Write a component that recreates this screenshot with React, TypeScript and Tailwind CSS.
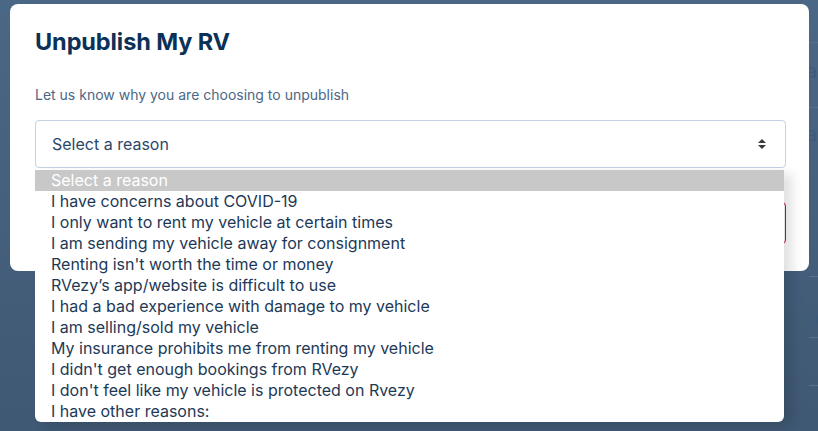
import { useState } from "react";

const reasons = [
  "Select a reason",
  "I have concerns about COVID-19",
  "I only want to rent my vehicle at certain times",
  "I am sending my vehicle away for consignment",
  "Renting isn't worth the time or money",
  "RVezy’s app/website is difficult to use",
  "I had a bad experience with damage to my vehicle",
  "I am selling/sold my vehicle",
  "My insurance prohibits me from renting my vehicle",
  "I didn't get enough bookings from RVezy",
  "I don't feel like my vehicle is protected on Rvezy",
  "I have other reasons:",
];

const Caret = () => (
  <svg width="10" height="12" viewBox="0 0 10 12" className="text-[#343a40]">
    <path d="M1 5 L5 1 L9 5 Z" fill="currentColor" />
    <path d="M1 7 L5 11 L9 7 Z" fill="currentColor" />
  </svg>
);

export default function App() {
  const [selected] = useState(0);
  return (
    <div className="relative w-[818px] h-[431px] overflow-hidden bg-gradient-to-b from-[#4b6786] to-[#3f5873] font-['Inter','Noto_Sans',sans-serif]">
      {/* table of the page behind the overlay, mostly hidden */}
      <div className="absolute left-[809px] top-0 w-[9px] h-full overflow-hidden text-[#3e5b7b]">
        <div className="w-[60px] -ml-[4px]">
          <div className="h-[43px] border-b border-[#56708d]" />
          <div className="h-[65px] border-b border-[#56708d] pt-[16px] text-[20px] leading-[24px] pl-[1px]">a</div>
          <div className="h-[169px] border-b border-[#56708d] pt-[14px] text-[20px] leading-[24px] pl-[1px]">a</div>
          <div className="h-[61px] border-b border-[#56708d] pt-[33px] text-[15px] leading-[20px] font-semibold -ml-[26px]">
            Length
          </div>
          <div className="h-[48px] border-b border-[#56708d] pt-[14px] text-[16px] leading-[20px] -ml-[21px]">42</div>
        </div>
      </div>

      <div className="pt-[4px] pl-[10px]">
        <div className="w-[799px] h-[267px] bg-white rounded-[8px] px-[25px] pt-[22px]">
          <h2 className="text-[23.5px] leading-[32px] font-bold text-[#0b3157] tracking-[-0.1px]">Unpublish My RV</h2>
          <p className="mt-[27px] text-[14px] leading-[20px] text-[#4b6785]">
            Let us know why you are choosing to unpublish
          </p>
          <div className="mt-[15px] relative">
            <div className="h-[48px] w-[751px] border border-[#c3d1e2] rounded-[4px] flex items-center justify-between pl-[16px] pr-[18px] text-[16px] text-[#2c4868]">
              <span>Select a reason</span>
              <Caret />
            </div>
            <div className="mt-[34px] flex justify-end w-[751px]">
              <button className="h-[42px] w-[150px] border border-[#c8102e] rounded-[4px] text-[#c8102e] text-[15px] font-semibold">
                Unpublish
              </button>
            </div>

            <ul className="absolute left-0 top-[50px] w-[749px] bg-white rounded-b-[6px] shadow-[8px_4px_12px_rgba(0,0,0,0.12)] overflow-hidden text-[16px] leading-[21px] text-[#1d3957]">
              {reasons.map((r, i) => (
                <li
                  key={r}
                  className={
                    i === selected
                      ? "h-[21px] pl-[16px] bg-[#c8c8c8] text-white"
                      : "h-[21px] pl-[16px]"
                  }
                >
                  {r}
                </li>
              ))}
            </ul>
          </div>
        </div>
      </div>
    </div>
  );
}
